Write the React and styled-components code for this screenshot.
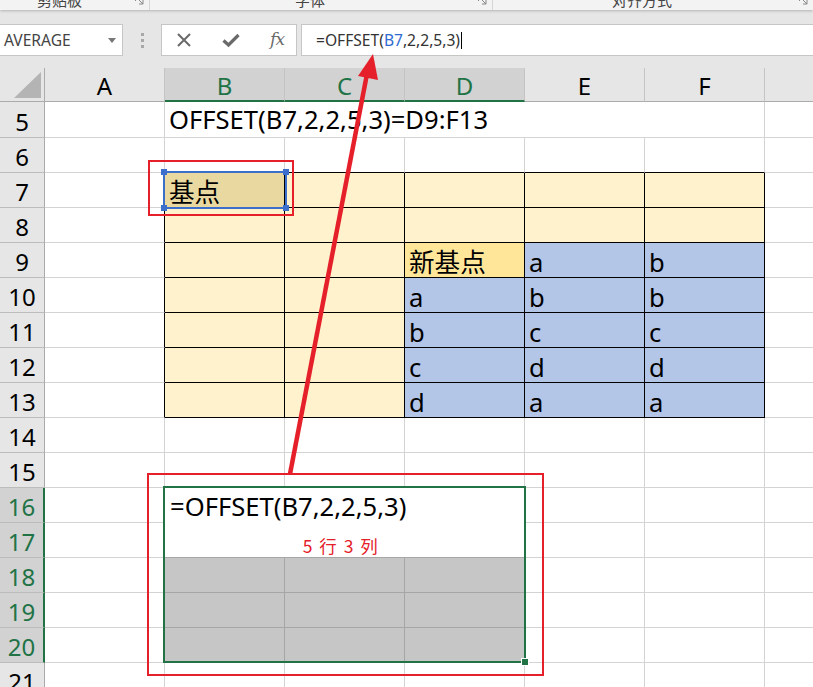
import React from 'react';
import styled, { createGlobalStyle } from 'styled-components';

const GRID = '#d4d4d4';
const GREEN = '#217346';
const RED = '#e5202a';
const UI_FONT = `"Noto Sans", "Noto Sans CJK SC", sans-serif`;
const CELL_FONT = `"Noto Sans", "Noto Sans CJK SC", sans-serif`;

const Global = createGlobalStyle`
  html, body { margin: 0; padding: 0; background: #fff; overflow: hidden; }
  #root { width: 813px; height: 687px; }
`;

const Page = styled.div`
  position: relative;
  width: 813px;
  height: 687px;
  overflow: hidden;
  background: #fff;
  font-family: ${UI_FONT};
  display: flex;
  flex-direction: column;
`;

/* ---------- ribbon strip ---------- */
const Ribbon = styled.div`
  height: 10px;
  flex: none;
  display: flex;
  background: #f3f3f3;
  overflow: hidden;
  position: relative;
  z-index: 2;
  box-shadow: 0 1px 3px rgba(0, 0, 0, 0.22);
`;
const RibbonGroup = styled.div`
  width: ${p => p.$w}px;
  flex: none;
  display: flex;
  align-items: flex-start;
  justify-content: space-between;
  padding-left: ${p => p.$left}px;
  padding-right: 4px;
  box-sizing: border-box;
  border-right: ${p => (p.$sep ? '1px solid #d6d6d6' : 'none')};
`;
const RibbonLabel = styled.span`
  font-size: 15px;
  line-height: 15px;
  color: #444;
  margin-top: -8px;
  font-family: "Noto Sans CJK SC", sans-serif;
`;
const Launcher = styled.svg`
  width: 10px;
  height: 10px;
  margin-top: -4px;
  flex: none;
`;

/* ---------- formula toolbar ---------- */
const Toolbar = styled.div`
  height: 58px;
  flex: none;
  box-sizing: border-box;
  padding: 14px 0 12px 0;
  background: #e6e6e6;
  display: flex;
  align-items: stretch;
`;
const NameBox = styled.div`
  width: 123px;
  flex: none;
  box-sizing: border-box;
  background: #fff;
  border: 1px solid #c6c6c6;
  border-left: none;
  display: flex;
  align-items: center;
  justify-content: space-between;
  padding: 0 6px 0 4px;
  font-size: 15.6px;
  color: #444;
`;
const Dots = styled.div`
  width: 38px;
  flex: none;
  display: flex;
  flex-direction: column;
  align-items: center;
  justify-content: center;
  gap: 3px;
  & > i {
    width: 3px;
    height: 3px;
    background: #a8a8a8;
    display: block;
  }
`;
const ButtonBox = styled.div`
  width: 136px;
  flex: none;
  box-sizing: border-box;
  background: #fff;
  border: 1px solid #c6c6c6;
  display: flex;
  align-items: center;
  justify-content: space-between;
  padding: 0 12px 0 14px;
  margin-right: 4px;
`;
const Fx = styled.span`
  font-family: "DejaVu Serif", "Liberation Serif", serif;
  font-style: italic;
  font-size: 17px;
  color: #6a6a6a;
  letter-spacing: -1px;
  margin-top: -2px;
`;
const FormulaInput = styled.div`
  flex: 1;
  box-sizing: border-box;
  background: #fff;
  border: 1px solid #c6c6c6;
  border-right: none;
  display: flex;
  align-items: center;
  padding-left: 14px;
  font-size: 15.6px;
  color: #333;
  white-space: nowrap;
`;
const Ref = styled.span`
  color: #2f6bd0;
`;
const Caret = styled.span`
  display: inline-block;
  width: 1px;
  height: 17px;
  background: #000;
  margin-left: 1px;
`;

/* ---------- sheet ---------- */
const Sheet = styled.div`
  flex: none;
  display: grid;
  grid-template-columns: 45px repeat(7, 120px);
  grid-template-rows: 34px 36px repeat(16, 35px);
  font-family: ${CELL_FONT};
`;
const Corner = styled.div`
  grid-column: 1;
  grid-row: 1;
  background: #e6e6e6;
  border-right: 1px solid #ababab;
  border-bottom: 1px solid #ababab;
`;
const ColHead = styled.div`
  background: ${p => (p.$sel ? '#d2d2d2' : '#e6e6e6')};
  color: ${p => (p.$sel ? GREEN : '#000')};
  border-right: 1px solid #c4c4c4;
  border-bottom: ${p => (p.$sel ? `2px solid ${GREEN}` : '1px solid #ababab')};
  display: flex;
  align-items: flex-end;
  justify-content: center;
  font-size: 24px;
  line-height: 1;
  padding-bottom: ${p => (p.$sel ? 2 : 3)}px;
`;
const RowHead = styled.div`
  background: ${p => (p.$sel ? '#d2d2d2' : '#e6e6e6')};
  color: ${p => (p.$sel ? GREEN : '#000')};
  border-right: ${p => (p.$sel ? `2px solid ${GREEN}` : '1px solid #ababab')};
  border-bottom: 1px solid #bcbcbc;
  display: flex;
  align-items: flex-end;
  justify-content: center;
  font-size: 24px;
  line-height: 1;
  padding-bottom: 3px;
`;
const Cell = styled.div`
  grid-column: ${p => p.$col} / span ${p => p.$cspan || 1};
  grid-row: ${p => p.$row} / span ${p => p.$rspan || 1};
  background: ${p => p.$bg || '#fff'};
  border-right: 1px solid ${p => p.$br || GRID};
  border-bottom: 1px solid ${p => p.$bb || GRID};
  display: flex;
  align-items: flex-end;
  padding: 0 0 ${p => (p.$pb == null ? 1 : p.$pb)}px 4px;
  font-size: 25.6px;
  line-height: 1;
  white-space: nowrap;
  color: #000;
  min-width: 0;
`;
const Block = styled.div`
  grid-column: 3 / span 3;
  grid-row: 13 / span 2;
  background: #fff;
  border-right: 1px solid ${GRID};
  border-bottom: 1px solid #a6a6a6;
  display: flex;
  flex-direction: column;
`;
const BlockFormula = styled.div`
  height: 35px;
  display: flex;
  align-items: flex-end;
  padding: 0 0 3px 5px;
  box-sizing: border-box;
  font-size: 25.6px;
  line-height: 1;
  white-space: nowrap;
`;
const Note = styled.div`
  flex: 1;
  display: flex;
  align-items: flex-end;
  justify-content: center;
  padding: 0 8px 3px 0;
  font-family: "Noto Sans CJK SC", sans-serif;
  font-size: 17.5px;
  line-height: 1;
  color: ${RED};
  letter-spacing: 0.5px;
  word-spacing: 2px;
`;

/* ---------- overlays ---------- */
const Frame = styled.div`
  position: absolute;
  left: ${p => p.$x}px;
  top: ${p => p.$y}px;
  width: ${p => p.$w}px;
  height: ${p => p.$h}px;
  box-sizing: border-box;
  border: 2px solid ${p => p.$c};
  pointer-events: none;
`;
const Handle = styled.i`
  position: absolute;
  width: 6px;
  height: 6px;
  background: ${p => p.$c};
  box-sizing: border-box;
  border: ${p => (p.$white ? '1px solid #fff' : 'none')};
  ${p => p.$pos};
`;
const ArrowSvg = styled.svg`
  position: absolute;
  left: 0;
  top: 0;
  width: 813px;
  height: 687px;
  pointer-events: none;
  z-index: 5;
`;

const COLS = ['A', 'B', 'C', 'D', 'E', 'F', 'G'];
const ROWS = Array.from({ length: 17 }, (_, i) => i + 5);

const DATA = {
  D9: '新基点', E9: 'a', F9: 'b',
  D10: 'a', E10: 'b', F10: 'b',
  D11: 'b', E11: 'c', F11: 'c',
  D12: 'c', E12: 'd', F12: 'd',
  D13: 'd', E13: 'a', F13: 'a',
  B7: '基点',
};

function cellProps(r, ci) {
  const c = COLS[ci];
  const p = {};
  const inBox = r >= 7 && r <= 13 && ci >= 1 && ci <= 5;
  if (inBox) {
    p.br = '#000';
    p.bb = '#000';
    if (r <= 8 || ci <= 2) p.bg = '#fff2cc';
    else p.bg = '#b4c6e7';
    if (r === 7 && ci === 1) p.bg = '#e9d89f';
    if (r === 9 && ci === 3) p.bg = '#ffe699';
  }
  if (ci === 0 && r >= 7 && r <= 13) p.br = '#000';
  if (r === 6 && ci >= 1 && ci <= 5) p.bb = '#000';
  if (r >= 18 && r <= 20 && ci >= 1 && ci <= 3) {
    p.bg = '#c6c6c6';
    p.br = '#a6a6a6';
    p.bb = '#a6a6a6';
  }
  p.text = DATA[c + r] || '';
  return p;
}

function XIcon() {
  return (
    <svg width="16" height="16" viewBox="0 0 16 16">
      <path d="M2 2 L14 14 M14 2 L2 14" stroke="#6a6a6a" strokeWidth="2" fill="none" />
    </svg>
  );
}
function CheckIcon() {
  return (
    <svg width="18" height="16" viewBox="0 0 18 16">
      <path d="M1.5 8.5 L6.5 13 L16.5 3" stroke="#6a6a6a" strokeWidth="3.2" fill="none" strokeLinejoin="miter" />
    </svg>
  );
}
function LauncherIcon() {
  return (
    <Launcher viewBox="0 0 10 10">
      <path d="M0.5 0.5 H5 M0.5 0.5 V5 M2.5 2.5 L8 8 M8 4 V8 H4" stroke="#888" strokeWidth="1" fill="none" />
    </Launcher>
  );
}

export default function App() {
  const cells = [];
  ROWS.forEach((r, ri) => {
    const gridRow = ri + 2;
    cells.push(
      <RowHead key={'rh' + r} $sel={r >= 16 && r <= 20} style={{ gridRow }}>
        {r}
      </RowHead>
    );
    COLS.forEach((c, ci) => {
      const gridCol = ci + 2;
      if (r === 5 && ci >= 2 && ci <= 5) return;
      if ((r === 16 || r === 17) && ci >= 1 && ci <= 3) return;
      if (r === 5 && ci === 1) {
        cells.push(
          <Cell key={c + r} $col={gridCol} $row={gridRow} $cspan={5} $pb={4}>
            OFFSET(B7,2,2,5,3)=D9:F13
          </Cell>
        );
        return;
      }
      const p = cellProps(r, ci);
      cells.push(
        <Cell key={c + r} $col={gridCol} $row={gridRow} $bg={p.bg} $br={p.br} $bb={p.bb}>
          {p.text}
        </Cell>
      );
    });
  });

  return (
    <Page>
      <Global />
      <Ribbon>
        <RibbonGroup $w={150} $left={37} $sep>
          <RibbonLabel>剪贴板</RibbonLabel>
          <LauncherIcon />
        </RibbonGroup>
        <RibbonGroup $w={343} $left={145} $sep>
          <RibbonLabel>字体</RibbonLabel>
          <LauncherIcon />
        </RibbonGroup>
        <RibbonGroup $w={320} $left={119}>
          <RibbonLabel>对齐方式</RibbonLabel>
          <LauncherIcon />
        </RibbonGroup>
      </Ribbon>

      <Toolbar>
        <NameBox>
          <span>AVERAGE</span>
          <svg width="8" height="5" viewBox="0 0 8 5">
            <path d="M0 0 H8 L4 5 Z" fill="#777" />
          </svg>
        </NameBox>
        <Dots>
          <i />
          <i />
          <i />
        </Dots>
        <ButtonBox>
          <XIcon />
          <CheckIcon />
          <Fx>fx</Fx>
        </ButtonBox>
        <FormulaInput>
          =OFFSET(<Ref>B7</Ref>,2,2,5,3)
          <Caret />
        </FormulaInput>
      </Toolbar>

      <Sheet>
        <Corner>
          <svg width="44" height="33" viewBox="0 0 44 33">
            <polygon points="41,4 41,30 14,30" fill="#b4b4b4" />
          </svg>
        </Corner>
        {COLS.map((c, ci) => (
          <ColHead key={c} $sel={ci >= 1 && ci <= 3} style={{ gridColumn: ci + 2, gridRow: 1 }}>
            {c}
          </ColHead>
        ))}
        {cells}
        <Block>
          <BlockFormula>=OFFSET(B7,2,2,5,3)</BlockFormula>
          <Note>5 行 3 列</Note>
        </Block>
      </Sheet>

      <Frame $x={163} $y={171} $w={124} $h={38} $c="#3b6fcb">
        <Handle $c="#3b6fcb" $pos="left:-4px;top:-4px;" />
        <Handle $c="#3b6fcb" $pos="right:-4px;top:-4px;" />
        <Handle $c="#3b6fcb" $pos="left:-4px;bottom:-4px;" />
        <Handle $c="#3b6fcb" $pos="right:-4px;bottom:-4px;" />
      </Frame>

      <Frame $x={163} $y={486} $w={363} $h={177} $c={GREEN}>
        <Handle $c={GREEN} $white $pos="right:-5px;bottom:-5px;width:8px;height:8px;" />
      </Frame>

      <Frame $x={148} $y={160} $w={146} $h={56} $c={RED} />
      <Frame $x={147} $y={473} $w={397} $h={203} $c={RED} />

      <ArrowSvg viewBox="0 0 813 687">
        <line x1="290" y1="474" x2="367" y2="74" stroke={RED} strokeWidth="4.5" />
        <polygon points="373,54 358,76 378,80" fill={RED} />
      </ArrowSvg>
    </Page>
  );
}
